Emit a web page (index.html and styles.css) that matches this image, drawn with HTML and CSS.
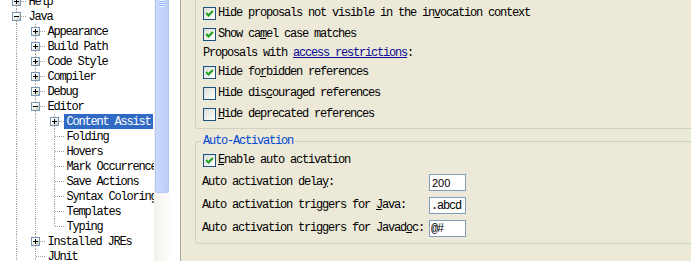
FILE: index.html
```html
<!DOCTYPE html>
<html lang="en">

<head>
    <meta charset="UTF-8">
    <title>Preferences - Content Assist</title>
    <link rel="stylesheet" href="styles.css">
</head>

<body>
    <!-- left: preference tree -->
    <div class="side">
        <div class="tree">
            <div class="row"><span class="cell tee"><i class="box plus"></i></span><span class="label">Help</span></div>
            <div class="row"><span class="cell tee"><i class="box"></i></span><span class="label">Java</span></div>
            <div class="row"><span class="cell pipe"></span><span class="cell tee"><i class="box plus"></i></span><span class="label">Appearance</span></div>
            <div class="row"><span class="cell pipe"></span><span class="cell tee"><i class="box plus"></i></span><span class="label">Build Path</span></div>
            <div class="row"><span class="cell pipe"></span><span class="cell tee"><i class="box plus"></i></span><span class="label">Code Style</span></div>
            <div class="row"><span class="cell pipe"></span><span class="cell tee"><i class="box plus"></i></span><span class="label">Compiler</span></div>
            <div class="row"><span class="cell pipe"></span><span class="cell tee"><i class="box plus"></i></span><span class="label">Debug</span></div>
            <div class="row"><span class="cell pipe"></span><span class="cell tee"><i class="box"></i></span><span class="label">Editor</span></div>
            <div class="row"><span class="cell pipe"></span><span class="cell pipe"></span><span class="cell tee"><i class="box plus"></i></span><span class="label sel">Content Assist</span></div>
            <div class="row"><span class="cell pipe"></span><span class="cell pipe"></span><span class="cell tee"></span><span class="label">Folding</span></div>
            <div class="row"><span class="cell pipe"></span><span class="cell pipe"></span><span class="cell tee"></span><span class="label">Hovers</span></div>
            <div class="row"><span class="cell pipe"></span><span class="cell pipe"></span><span class="cell tee"></span><span class="label">Mark Occurrences</span></div>
            <div class="row"><span class="cell pipe"></span><span class="cell pipe"></span><span class="cell tee"></span><span class="label">Save Actions</span></div>
            <div class="row"><span class="cell pipe"></span><span class="cell pipe"></span><span class="cell tee"></span><span class="label">Syntax Coloring</span></div>
            <div class="row"><span class="cell pipe"></span><span class="cell pipe"></span><span class="cell tee"></span><span class="label">Templates</span></div>
            <div class="row"><span class="cell pipe"></span><span class="cell pipe"></span><span class="cell elbow"></span><span class="label">Typing</span></div>
            <div class="row"><span class="cell pipe"></span><span class="cell tee"><i class="box plus"></i></span><span class="label">Installed JREs</span></div>
            <div class="row"><span class="cell pipe"></span><span class="cell tee"></span><span class="label">JUnit</span></div>
        </div>
        <div class="scrollbar">
            <div class="thumb"></div>
        </div>
        <div class="gap"></div>
    </div>

    <!-- right: content assist page -->
    <div class="page">
        <div class="group">
            <div class="opt"><span class="check"><svg width="11" height="11" viewBox="0 0 11 11"><path d="M2.2 5l2.3 2.4L8.8 3"/></svg></span><span>Hide proposals not visible in the in<u>v</u>ocation context</span></div>
            <div class="opt"><span class="check"><svg width="11" height="11" viewBox="0 0 11 11"><path d="M2.2 5l2.3 2.4L8.8 3"/></svg></span><span>Show ca<u>m</u>el case matches</span></div>
            <div class="note">Proposals with <a href="#">access restrictions</a>:</div>
            <div class="opt"><span class="check"><svg width="11" height="11" viewBox="0 0 11 11"><path d="M2.2 5l2.3 2.4L8.8 3"/></svg></span><span>Hide fo<u>r</u>bidden references</span></div>
            <div class="opt"><span class="check"></span><span>Hide dis<u>c</u>ouraged references</span></div>
            <div class="opt"><span class="check"></span><span><u>H</u>ide deprecated references</span></div>
        </div>

        <fieldset class="group auto">
            <legend>Auto-Activation</legend>
            <div class="opt"><span class="check"><svg width="11" height="11" viewBox="0 0 11 11"><path d="M2.2 5l2.3 2.4L8.8 3"/></svg></span><span><u>E</u>nable auto activation</span></div>
            <div class="field"><label>Auto activation dela<u>y</u>:</label><input class="num" type="text" value="200"></div>
            <div class="field"><label>Auto activation triggers for <u>J</u>ava:</label><input type="text" value=".abcd"></div>
            <div class="field"><label>Auto activation triggers for Javad<u>o</u>c:</label><input type="text" value="@#"></div>
        </fieldset>
    </div>
</body>

</html>
```

FILE: styles.css
```css
:root {
    --v: repeating-linear-gradient(#a0a0a0 0 1px, transparent 1px 2px);
    --h: repeating-linear-gradient(to right, #a0a0a0 0 1px, transparent 1px 2px);
}

* {
    margin: 0;
    padding: 0;
    box-sizing: border-box;
}

body {
    display: flex;
    height: 261px;
    overflow: hidden;
    font: 12px/15px "Liberation Mono", monospace;
    letter-spacing: -1.2px;
    color: #000;
    background: #ece9d8;
}

/* tree */
.side {
    display: flex;
    flex: none;
    width: 181px;
    background: #fff;
    border-right: 1px solid #aca899;
}

.tree {
    width: 154px;
    flex: none;
    padding-left: 7px;
    margin-top: -6px;
    overflow: hidden;
}

.row {
    display: flex;
    height: 15px;
    white-space: nowrap;
}

.cell {
    flex: none;
    width: 19px;
    height: 15px;
    display: flex;
    align-items: center;
    padding-left: 5px;
}

.pipe {
    background: var(--v) 9px 0 / 1px 15px no-repeat;
}

.tee {
    background: var(--h) 10px 7px / 9px 1px no-repeat, var(--v) 9px 0 / 1px 15px no-repeat;
}

.elbow {
    background: var(--h) 10px 7px / 9px 1px no-repeat, var(--v) 9px 0 / 1px 8px no-repeat;
}

.box {
    display: block;
    width: 9px;
    height: 9px;
    border: 1px solid #7898b5;
    background: linear-gradient(#000, #000) center / 5px 1px no-repeat,
        linear-gradient(135deg, #fff 35%, #c6c6b8);
}

.box.plus {
    background: linear-gradient(#000, #000) center / 5px 1px no-repeat,
        linear-gradient(#000, #000) center / 1px 5px no-repeat,
        linear-gradient(135deg, #fff 35%, #c6c6b8);
}

.label {
    padding: 1px 2px 0 2.5px;
    line-height: 14px;
}

.sel {
    background: #316ac5;
    color: #fff;
}

.scrollbar {
    flex: none;
    width: 17px;
    background: linear-gradient(to right, #f3f1ec, #fefefb);
}

.thumb {
    height: 193px;
    margin: 0 2px 0 1px;
    border: 1px solid #b4c8f4;
    border-top: none;
    border-radius: 0 0 3px 3px;
    background: repeating-linear-gradient(#eef4fe 0 1px, #8cb0f8 1px 2px) 3px 0 / 6px 7px no-repeat,
        linear-gradient(to right, #cbd9fc, #bccff9);
}

.gap {
    flex: none;
    width: 9px;
}

/* page */
.page {
    flex: 1;
    padding-left: 14px;
    overflow: hidden;
}

.group {
    width: 620px;
    margin-top: -8px;
    padding: 10px 0 3px 7px;
    border: 1px solid #d0d0bf;
    border-radius: 3px;
}

.auto {
    margin-top: 5px;
    padding: 2px 0 3px 5px;
    min-inline-size: 0;
}

.auto legend {
    padding: 0 2px;
    line-height: 14px;
    color: #0046d5;
}

.auto .opt {
    margin-left: 2px;
}

.auto .field {
    margin-left: 1px;
}

.opt {
    display: flex;
    align-items: center;
    gap: 2px;
    height: 21px;
    white-space: nowrap;
}

.note {
    height: 17px;
    line-height: 17px;
    white-space: nowrap;
}

.note a {
    color: #0a0a96;
}

.check {
    flex: none;
    width: 13px;
    height: 13px;
    border: 1px solid #1c5180;
    background: linear-gradient(135deg, #dcdcd7, #fff);
}

.check svg {
    display: block;
    fill: none;
    stroke: #21a121;
    stroke-width: 2.2;
}

.field {
    display: flex;
    align-items: center;
    height: 23px;
    white-space: nowrap;
}

.field label {
    width: 227px;
}

.field input {
    width: 37px;
    height: 17px;
    padding: 0 1px;
    border: 1px solid #7f9db9;
    background: #fff;
    font: 12px "Liberation Mono", monospace;
    letter-spacing: -1.2px;
    color: #000;
    outline: none;
}

.field input.num {
    font: 11px "Liberation Sans", sans-serif;
    letter-spacing: 0;
    padding-left: 2px;
}
```
